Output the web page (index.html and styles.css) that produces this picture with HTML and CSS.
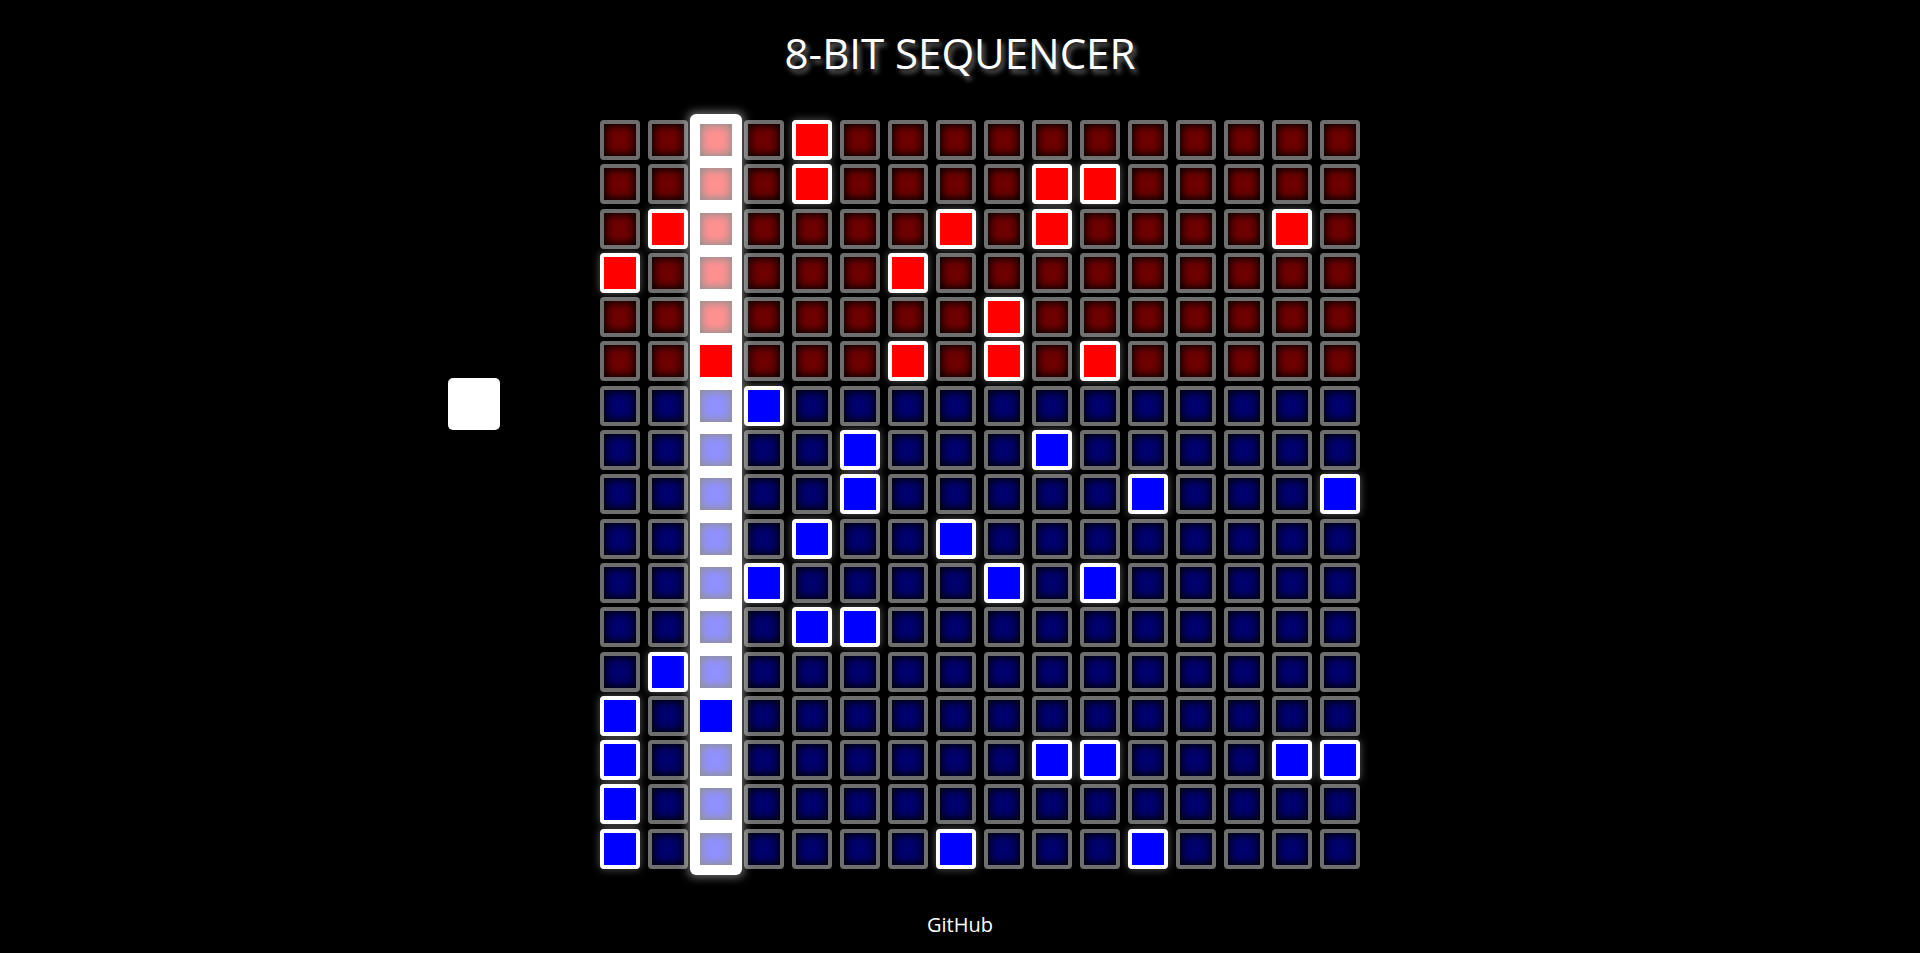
FILE: index.html
```html
<!DOCTYPE html>
<html lang="en">
<head>
    <meta charset="UTF-8">
    <meta name="viewport" content="width=device-width, initial-scale=1.0">
    <title>8-Bit Sequencer</title>
    <link rel="stylesheet" href="styles.css">
    <script src="app.js" defer></script>
</head>
<body>
    <h1 class="title">8-BIT SEQUENCER</h1>

    <div class="stage">
        <div class="controls">
            <button class="play-btn" aria-label="Play"></button>
        </div>
        <!-- columns are built by app.js -->
        <div id="grid" class="grid"></div>
        <div class="spacer"></div>
    </div>

    <div class="footer">
        <a href="#" class="github">GitHub</a>
    </div>
</body>
</html>
```

FILE: app.js
```js
// which steps are switched on, one list of columns per row
// rows 0-5 are the red (melody) rows, the rest are blue (bass)
const pattern = [
    [4],
    [4, 9, 10],
    [1, 7, 9, 14],
    [0, 6],
    [8],
    [2, 6, 8, 10],
    [3],
    [5, 9],
    [5, 11, 15],
    [4, 7],
    [3, 8, 10],
    [4, 5],
    [1],
    [0, 2],
    [0, 9, 10, 14, 15],
    [0],
    [0, 7, 11]
];
const STEPS = 16;
const RED_ROWS = 6;
let currentStep = 2;

function buildGrid() {
    const grid = document.getElementById("grid");
    grid.innerHTML = "";
    for (let c = 0; c < STEPS; c++) {
        const col = document.createElement("div");
        col.className = "column" + (c === currentStep ? " playing" : "");
        for (let r = 0; r < pattern.length; r++) {
            const cell = document.createElement("div");
            cell.className = "cell " + (r < RED_ROWS ? "red" : "blue");
            if (pattern[r].includes(c)) cell.classList.add("on");
            cell.addEventListener("click", () => {
                cell.classList.toggle("on");
            });
            col.appendChild(cell);
        }
        grid.appendChild(col);
    }
}

document.addEventListener("DOMContentLoaded", buildGrid);
```

FILE: styles.css
```css
body {
    margin: 0;
    background-color: #000;
    color: #fff;
    font-family: "Open Sans", "Noto Sans", sans-serif;
}
.title {
    margin: 21px 0 0;
    font-size: 42px;
    font-weight: 400;
    line-height: 63px;
    text-align: center;
    text-shadow: 3px 4px 5px #707070;
}
.stage {
    display: flex;
    justify-content: center;
    align-items: flex-start;
    margin-top: 36px;
}
.controls {
    width: 152px;
    padding-top: 258px;
}
.play-btn {
    display: block;
    width: 52px;
    height: 52px;
    padding: 0;
    border: none;
    border-radius: 5px;
    background-color: #fff;
    cursor: pointer;
}
.spacer {
    width: 112px;
}
.grid {
    display: flex;
    gap: 8px;
}
.column {
    display: flex;
    flex-direction: column;
    gap: 4.3px;
}
/* the step that is currently sounding */
.column.playing {
    background-color: #fff;
    border-radius: 2px;
    box-shadow: 0 0 0 6px #fff, 0 0 10px 8px rgba(255, 255, 255, 0.45);
}
.cell {
    width: 40px;
    height: 40px;
    box-sizing: border-box;
    border: 4px solid #fff;
    border-radius: 4px;
    opacity: 0.43;
    box-shadow: inset 0 0 8px 2px #000;
    cursor: pointer;
}
.cell.red {
    background-color: #f00;
}
.cell.blue {
    background-color: #00f;
}
.cell.on {
    opacity: 1;
    box-shadow: 0 0 8px rgba(255, 255, 255, 0.35);
}
.footer {
    margin-top: 42px;
    text-align: center;
}
.github {
    color: #fff;
    font-size: 20px;
    text-decoration: none;
}
```
